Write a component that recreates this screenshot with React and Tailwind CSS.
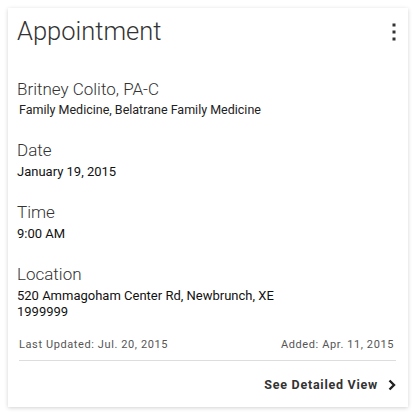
const Section = ({ label, children }) => (
  <div className="mt-[21px]">
    <div className="text-[17px] font-light leading-[22px] text-[#333]">{label}</div>
    <div className="text-[13px] leading-[16px] text-[#111] mt-[3px]">{children}</div>
  </div>
);

export default function App() {
  return (
    <div className="w-[416px] h-[416px] bg-white p-[8px] pb-[9px]" style={{ fontFamily: 'Roboto, "Liberation Sans", sans-serif' }}>
      <div className="h-full bg-white shadow-[0_1px_4px_rgba(0,0,0,0.18)] px-[9px] flex flex-col">
        <div className="flex items-start justify-between pt-[6px]">
          <h1 className="text-[25.5px] font-light leading-[34px] text-[#333]">Appointment</h1>
          <svg width="4" height="18" viewBox="0 0 4 18" className="mt-[9px] mr-[3px]">
            <rect x="0.5" y="0.5" width="3" height="3" fill="#333" />
            <rect x="0.5" y="7.5" width="3" height="3" fill="#333" />
            <rect x="0.5" y="14.5" width="3" height="3" fill="#333" />
          </svg>
        </div>
        <div className="mt-[30px]">
          <div className="text-[17px] font-light leading-[22px] text-[#333]">Britney Colito, PA-C</div>
          <div className="text-[12.5px] leading-[16px] text-[#222] mt-[2px] ml-[2px]">Family Medicine, Belatrane Family Medicine</div>
        </div>
        <Section label="Date">January 19, 2015</Section>
        <Section label="Time">9:00 AM</Section>
        <Section label="Location">
          520 Ammagoham Center Rd, Newbrunch, XE<br />1999999
        </Section>
        <div className="flex justify-between mt-[18px] pl-[2px] pr-[5px] text-[11px] leading-[14px] tracking-[0.6px] text-[#555]">
          <span>Last Updated: Jul. 20, 2015</span>
          <span>Added: Apr. 11, 2015</span>
        </div>
        <div className="h-px bg-[#ddd] ml-[2px] mr-[3px] mt-[8px]" />
        <div className="flex justify-end items-center mt-[15px] gap-[10px] pr-[3px]">
          <span className="text-[12.5px] font-bold tracking-[0.75px] text-[#333]">See Detailed View</span>
          <svg width="8" height="12" viewBox="0 0 8 12">
            <polyline points="1.5,1.5 6,6 1.5,10.5" fill="none" stroke="#222" strokeWidth="2.4" />
          </svg>
        </div>
      </div>
    </div>
  );
}
